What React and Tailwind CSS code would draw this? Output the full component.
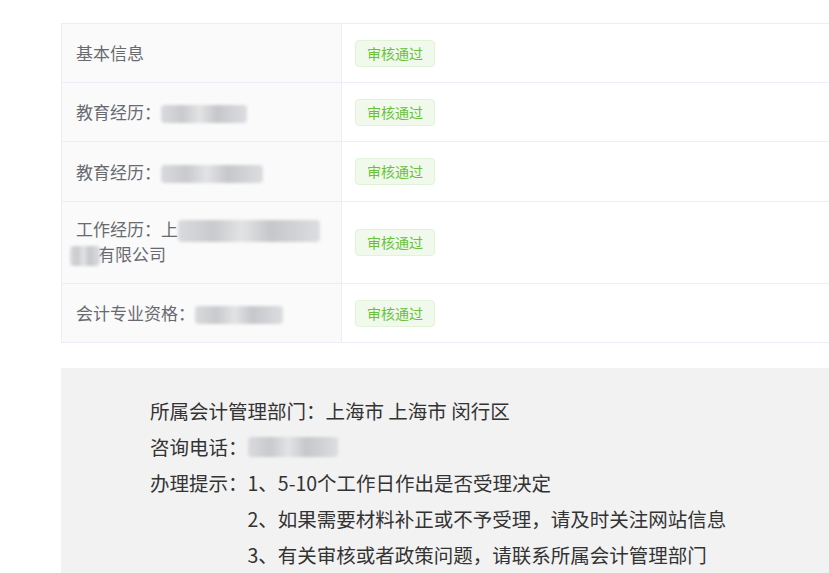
const rows = [
  { label: '基本信息', blur: null, h: 'h-[58px]' },
  { label: '教育经历：', blur: 86, h: 'h-[58px]' },
  { label: '教育经历：', blur: 102, h: 'h-[59px]' },
  { label: '工作经历：上', blur: 142, second: true, h: 'h-[81px]' },
  { label: '会计专业资格：', blur: 88, h: 'h-[58px]' },
];

function Blur({ w, h = 20 }) {
  return (
    <span
      className="inline-block align-middle rounded-sm blur-[1.5px] bg-[linear-gradient(90deg,#d9dadd_0%,#c9cacd_25%,#e2e3e5_45%,#c6c7ca_65%,#dcdde0_100%)]"
      style={{ width: w, height: h }}
    />
  );
}

function StatusTag() {
  return (
    <span className="inline-flex h-[27px] items-center rounded-[4px] border border-[#e1f3d8] bg-[#f0f9eb] px-[11px] text-[14px] text-[#67c23a]">
      审核通过
    </span>
  );
}

export default function App() {
  return (
    <div className="min-h-[573px] bg-white pt-[23px] font-['Noto_Sans_CJK_SC','Noto_Sans',sans-serif]">
      <div className="ml-[61px] border-t border-l border-[#ebeef5]">
        {rows.map((r, i) => (
          <div key={i} className="flex border-b border-[#ebeef5]">
            <div
              className={`flex w-[280px] shrink-0 items-center border-r border-[#ebeef5] bg-[#fafafa] px-[14px] text-[17px] leading-[24px] text-[#686a70] ${r.h}`}
            >
              {r.second ? (
                <div className="-mt-[2px]">
                  <div className="whitespace-nowrap">
                    {r.label}
                    <Blur w={r.blur} h={22} />
                  </div>
                  <div className="whitespace-nowrap">
                    <span className="-ml-[6px] mr-[-2px]">
                      <Blur w={30} h={20} />
                    </span>
                    有限公司
                  </div>
                </div>
              ) : (
                <div className="whitespace-nowrap">
                  {r.label}
                  {r.blur && <Blur w={r.blur} h={18} />}
                </div>
              )}
            </div>
            <div className="flex flex-1 items-center px-[13px]">
              <StatusTag />
            </div>
          </div>
        ))}
      </div>

      <div className="ml-[61px] mt-[25px] bg-[#f2f2f2] pl-[89px] pt-[25px] pb-[10px] text-[19.5px] leading-[36px] text-[#333333]">
        <div>所属会计管理部门：上海市 上海市 闵行区</div>
        <div className="flex items-center">
          咨询电话：
          <Blur w={90} h={20} />
        </div>
        <div className="flex">
          <div className="shrink-0">办理提示：</div>
          <div>
            <div>1、5-10个工作日作出是否受理决定</div>
            <div>2、如果需要材料补正或不予受理，请及时关注网站信息</div>
            <div>3、有关审核或者政策问题，请联系所属会计管理部门</div>
          </div>
        </div>
      </div>
    </div>
  );
}
